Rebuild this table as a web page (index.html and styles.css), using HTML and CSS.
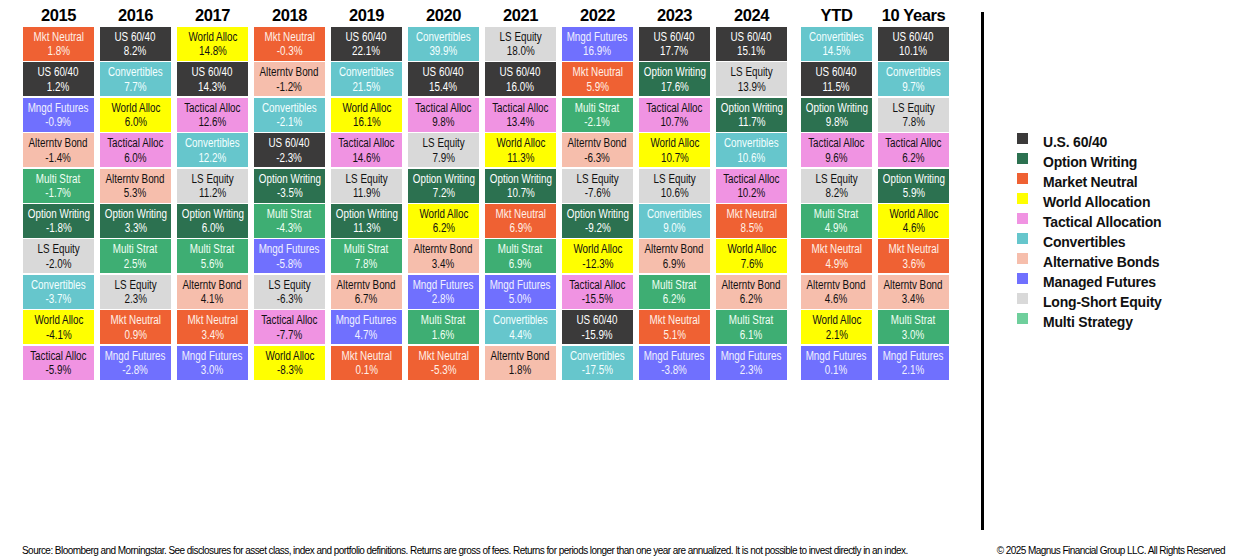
FILE: index.html
```html
<!DOCTYPE html>
<html lang="en">
<head>
<meta charset="utf-8">
<title>Asset Class Returns</title>
<link rel="stylesheet" href="styles.css">
</head>
<body>
<div class="page">
  <div class="main">
    <div class="chart">
      <div class="col">
        <div class="yr">2015</div>
        <div class="cell c-mn"><span>Mkt Neutral<br>1.8%</span></div>
        <div class="cell c-us"><span>US 60/40<br>1.2%</span></div>
        <div class="cell c-mf"><span>Mngd Futures<br>-0.9%</span></div>
        <div class="cell c-ab"><span>Alterntv Bond<br>-1.4%</span></div>
        <div class="cell c-ms"><span>Multi Strat<br>-1.7%</span></div>
        <div class="cell c-ow"><span>Option Writing<br>-1.8%</span></div>
        <div class="cell c-ls"><span>LS Equity<br>-2.0%</span></div>
        <div class="cell c-cv"><span>Convertibles<br>-3.7%</span></div>
        <div class="cell c-wa"><span>World Alloc<br>-4.1%</span></div>
        <div class="cell c-ta"><span>Tactical Alloc<br>-5.9%</span></div>
      </div>
      <div class="col">
        <div class="yr">2016</div>
        <div class="cell c-us"><span>US 60/40<br>8.2%</span></div>
        <div class="cell c-cv"><span>Convertibles<br>7.7%</span></div>
        <div class="cell c-wa"><span>World Alloc<br>6.0%</span></div>
        <div class="cell c-ta"><span>Tactical Alloc<br>6.0%</span></div>
        <div class="cell c-ab"><span>Alterntv Bond<br>5.3%</span></div>
        <div class="cell c-ow"><span>Option Writing<br>3.3%</span></div>
        <div class="cell c-ms"><span>Multi Strat<br>2.5%</span></div>
        <div class="cell c-ls"><span>LS Equity<br>2.3%</span></div>
        <div class="cell c-mn"><span>Mkt Neutral<br>0.9%</span></div>
        <div class="cell c-mf"><span>Mngd Futures<br>-2.8%</span></div>
      </div>
      <div class="col">
        <div class="yr">2017</div>
        <div class="cell c-wa"><span>World Alloc<br>14.8%</span></div>
        <div class="cell c-us"><span>US 60/40<br>14.3%</span></div>
        <div class="cell c-ta"><span>Tactical Alloc<br>12.6%</span></div>
        <div class="cell c-cv"><span>Convertibles<br>12.2%</span></div>
        <div class="cell c-ls"><span>LS Equity<br>11.2%</span></div>
        <div class="cell c-ow"><span>Option Writing<br>6.0%</span></div>
        <div class="cell c-ms"><span>Multi Strat<br>5.6%</span></div>
        <div class="cell c-ab"><span>Alterntv Bond<br>4.1%</span></div>
        <div class="cell c-mn"><span>Mkt Neutral<br>3.4%</span></div>
        <div class="cell c-mf"><span>Mngd Futures<br>3.0%</span></div>
      </div>
      <div class="col">
        <div class="yr">2018</div>
        <div class="cell c-mn"><span>Mkt Neutral<br>-0.3%</span></div>
        <div class="cell c-ab"><span>Alterntv Bond<br>-1.2%</span></div>
        <div class="cell c-cv"><span>Convertibles<br>-2.1%</span></div>
        <div class="cell c-us"><span>US 60/40<br>-2.3%</span></div>
        <div class="cell c-ow"><span>Option Writing<br>-3.5%</span></div>
        <div class="cell c-ms"><span>Multi Strat<br>-4.3%</span></div>
        <div class="cell c-mf"><span>Mngd Futures<br>-5.8%</span></div>
        <div class="cell c-ls"><span>LS Equity<br>-6.3%</span></div>
        <div class="cell c-ta"><span>Tactical Alloc<br>-7.7%</span></div>
        <div class="cell c-wa"><span>World Alloc<br>-8.3%</span></div>
      </div>
      <div class="col">
        <div class="yr">2019</div>
        <div class="cell c-us"><span>US 60/40<br>22.1%</span></div>
        <div class="cell c-cv"><span>Convertibles<br>21.5%</span></div>
        <div class="cell c-wa"><span>World Alloc<br>16.1%</span></div>
        <div class="cell c-ta"><span>Tactical Alloc<br>14.6%</span></div>
        <div class="cell c-ls"><span>LS Equity<br>11.9%</span></div>
        <div class="cell c-ow"><span>Option Writing<br>11.3%</span></div>
        <div class="cell c-ms"><span>Multi Strat<br>7.8%</span></div>
        <div class="cell c-ab"><span>Alterntv Bond<br>6.7%</span></div>
        <div class="cell c-mf"><span>Mngd Futures<br>4.7%</span></div>
        <div class="cell c-mn"><span>Mkt Neutral<br>0.1%</span></div>
      </div>
      <div class="col">
        <div class="yr">2020</div>
        <div class="cell c-cv"><span>Convertibles<br>39.9%</span></div>
        <div class="cell c-us"><span>US 60/40<br>15.4%</span></div>
        <div class="cell c-ta"><span>Tactical Alloc<br>9.8%</span></div>
        <div class="cell c-ls"><span>LS Equity<br>7.9%</span></div>
        <div class="cell c-ow"><span>Option Writing<br>7.2%</span></div>
        <div class="cell c-wa"><span>World Alloc<br>6.2%</span></div>
        <div class="cell c-ab"><span>Alterntv Bond<br>3.4%</span></div>
        <div class="cell c-mf"><span>Mngd Futures<br>2.8%</span></div>
        <div class="cell c-ms"><span>Multi Strat<br>1.6%</span></div>
        <div class="cell c-mn"><span>Mkt Neutral<br>-5.3%</span></div>
      </div>
      <div class="col">
        <div class="yr">2021</div>
        <div class="cell c-ls"><span>LS Equity<br>18.0%</span></div>
        <div class="cell c-us"><span>US 60/40<br>16.0%</span></div>
        <div class="cell c-ta"><span>Tactical Alloc<br>13.4%</span></div>
        <div class="cell c-wa"><span>World Alloc<br>11.3%</span></div>
        <div class="cell c-ow"><span>Option Writing<br>10.7%</span></div>
        <div class="cell c-mn"><span>Mkt Neutral<br>6.9%</span></div>
        <div class="cell c-ms"><span>Multi Strat<br>6.9%</span></div>
        <div class="cell c-mf"><span>Mngd Futures<br>5.0%</span></div>
        <div class="cell c-cv"><span>Convertibles<br>4.4%</span></div>
        <div class="cell c-ab"><span>Alterntv Bond<br>1.8%</span></div>
      </div>
      <div class="col">
        <div class="yr">2022</div>
        <div class="cell c-mf"><span>Mngd Futures<br>16.9%</span></div>
        <div class="cell c-mn"><span>Mkt Neutral<br>5.9%</span></div>
        <div class="cell c-ms"><span>Multi Strat<br>-2.1%</span></div>
        <div class="cell c-ab"><span>Alterntv Bond<br>-6.3%</span></div>
        <div class="cell c-ls"><span>LS Equity<br>-7.6%</span></div>
        <div class="cell c-ow"><span>Option Writing<br>-9.2%</span></div>
        <div class="cell c-wa"><span>World Alloc<br>-12.3%</span></div>
        <div class="cell c-ta"><span>Tactical Alloc<br>-15.5%</span></div>
        <div class="cell c-us"><span>US 60/40<br>-15.9%</span></div>
        <div class="cell c-cv"><span>Convertibles<br>-17.5%</span></div>
      </div>
      <div class="col">
        <div class="yr">2023</div>
        <div class="cell c-us"><span>US 60/40<br>17.7%</span></div>
        <div class="cell c-ow"><span>Option Writing<br>17.6%</span></div>
        <div class="cell c-ta"><span>Tactical Alloc<br>10.7%</span></div>
        <div class="cell c-wa"><span>World Alloc<br>10.7%</span></div>
        <div class="cell c-ls"><span>LS Equity<br>10.6%</span></div>
        <div class="cell c-cv"><span>Convertibles<br>9.0%</span></div>
        <div class="cell c-ab"><span>Alterntv Bond<br>6.9%</span></div>
        <div class="cell c-ms"><span>Multi Strat<br>6.2%</span></div>
        <div class="cell c-mn"><span>Mkt Neutral<br>5.1%</span></div>
        <div class="cell c-mf"><span>Mngd Futures<br>-3.8%</span></div>
      </div>
      <div class="col">
        <div class="yr">2024</div>
        <div class="cell c-us"><span>US 60/40<br>15.1%</span></div>
        <div class="cell c-ls"><span>LS Equity<br>13.9%</span></div>
        <div class="cell c-ow"><span>Option Writing<br>11.7%</span></div>
        <div class="cell c-cv"><span>Convertibles<br>10.6%</span></div>
        <div class="cell c-ta"><span>Tactical Alloc<br>10.2%</span></div>
        <div class="cell c-mn"><span>Mkt Neutral<br>8.5%</span></div>
        <div class="cell c-wa"><span>World Alloc<br>7.6%</span></div>
        <div class="cell c-ab"><span>Alterntv Bond<br>6.2%</span></div>
        <div class="cell c-ms"><span>Multi Strat<br>6.1%</span></div>
        <div class="cell c-mf"><span>Mngd Futures<br>2.3%</span></div>
      </div>
      <div class="col col-ytd">
        <div class="yr">YTD</div>
        <div class="cell c-cv"><span>Convertibles<br>14.5%</span></div>
        <div class="cell c-us"><span>US 60/40<br>11.5%</span></div>
        <div class="cell c-ow"><span>Option Writing<br>9.8%</span></div>
        <div class="cell c-ta"><span>Tactical Alloc<br>9.6%</span></div>
        <div class="cell c-ls"><span>LS Equity<br>8.2%</span></div>
        <div class="cell c-ms"><span>Multi Strat<br>4.9%</span></div>
        <div class="cell c-mn"><span>Mkt Neutral<br>4.9%</span></div>
        <div class="cell c-ab"><span>Alterntv Bond<br>4.6%</span></div>
        <div class="cell c-wa"><span>World Alloc<br>2.1%</span></div>
        <div class="cell c-mf"><span>Mngd Futures<br>0.1%</span></div>
      </div>
      <div class="col">
        <div class="yr">10 Years</div>
        <div class="cell c-us"><span>US 60/40<br>10.1%</span></div>
        <div class="cell c-cv"><span>Convertibles<br>9.7%</span></div>
        <div class="cell c-ls"><span>LS Equity<br>7.8%</span></div>
        <div class="cell c-ta"><span>Tactical Alloc<br>6.2%</span></div>
        <div class="cell c-ow"><span>Option Writing<br>5.9%</span></div>
        <div class="cell c-wa"><span>World Alloc<br>4.6%</span></div>
        <div class="cell c-mn"><span>Mkt Neutral<br>3.6%</span></div>
        <div class="cell c-ab"><span>Alterntv Bond<br>3.4%</span></div>
        <div class="cell c-ms"><span>Multi Strat<br>3.0%</span></div>
        <div class="cell c-mf"><span>Mngd Futures<br>2.1%</span></div>
      </div>
    </div>
    <div class="divider"></div>
    <ul class="legend">
      <li><span class="sw c-us"></span>U.S. 60/40</li>
      <li><span class="sw c-ow"></span>Option Writing</li>
      <li><span class="sw c-mn"></span>Market Neutral</li>
      <li><span class="sw c-wa"></span>World Allocation</li>
      <li><span class="sw c-ta"></span>Tactical Allocation</li>
      <li><span class="sw c-cv"></span>Convertibles</li>
      <li><span class="sw c-ab"></span>Alternative Bonds</li>
      <li><span class="sw c-mf"></span>Managed Futures</li>
      <li><span class="sw c-ls"></span>Long-Short Equity</li>
      <li><span class="sw sw-ms"></span>Multi Strategy</li>
    </ul>
  </div>
  <div class="footer">
    <span class="source">Source: Bloomberg and Morningstar. See disclosures for asset class, index and portfolio definitions. Returns are gross of fees. Returns for periods longer than one year are annualized. It is not possible to invest directly in an index.</span>
    <span class="copy">© 2025 Magnus Financial Group LLC. All Rights Reserved</span>
  </div>
</div>
</body>
</html>
```

FILE: styles.css
```css
* { box-sizing: border-box; }
html, body { margin: 0; padding: 0; background: #fff; }
body { width: 1240px; height: 560px; overflow: hidden; font-family: "Liberation Sans", Arial, sans-serif; color: #000; }

.page { width: 1240px; height: 560px; }

.main { display: flex; align-items: flex-start; height: 540px; }

.chart { display: flex; gap: 6px; padding-left: 23px; }

.col { width: 71px; display: flex; flex-direction: column; gap: 1.4px; }
.col-ytd { margin-left: 8px; }

.yr {
  height: 25.6px;
  padding-top: 6px;
  text-align: center;
  font-family: "Liberation Sans", Arial, sans-serif;
  font-weight: bold;
  font-size: 16.5px;
  line-height: 18px;
  letter-spacing: -0.4px;
  white-space: nowrap;
}

.cell {
  height: 34px;
  display: flex;
  align-items: center;
  justify-content: center;
  text-align: center;
  font-family: "Liberation Sans", Arial, sans-serif;
  font-size: 12px;
  line-height: 14.5px;
  white-space: nowrap;
  color: #fff;
}
.cell > span {
  display: inline-block;
  flex: none;
  transform: scaleX(0.82);
  padding-top: 1px;
}

.c-us { background: #3b3a3a; color: #fff; }
.c-ow { background: #2c7150; color: #fff; }
.c-mn { background: #ef6133; color: #fff1e8; }
.c-wa { background: #ffff00; color: #111; }
.c-ta { background: #f093e2; color: #111; }
.c-cv { background: #66c6cc; color: #f4ffff; }
.c-ab { background: #f6beac; color: #111; }
.c-mf { background: #7070fe; color: #f0f0ff; }
.c-ls { background: #d9d9d9; color: #111; }
.c-ms { background: #3eae73; color: #f0fff4; }

.divider {
  width: 3px;
  height: 518px;
  margin-top: 12px;
  margin-left: 32px;
  background: #000;
}

.legend {
  list-style: none;
  margin: 0 0 0 33px;
  padding: 132px 0 0 0;
}
.legend li {
  display: flex;
  align-items: flex-start;
  height: 20px;
  font-family: "Liberation Sans", Arial, sans-serif;
  font-weight: bold;
  font-size: 14px;
  line-height: 20px;
  letter-spacing: -0.2px;
  color: #111;
  white-space: nowrap;
}
.sw {
  width: 11px;
  height: 11px;
  margin-top: 1px;
  margin-right: 15px;
  flex: none;
}
.sw-ms { background: #6fcf9c; }

.footer {
  display: flex;
  justify-content: space-between;
  align-items: baseline;
  padding: 5px 15px 0 22px;
  font-family: "Liberation Sans", Arial, sans-serif;
  font-size: 10px;
  line-height: 12px;
  letter-spacing: -0.55px;
  color: #000;
  white-space: nowrap;
}
```
